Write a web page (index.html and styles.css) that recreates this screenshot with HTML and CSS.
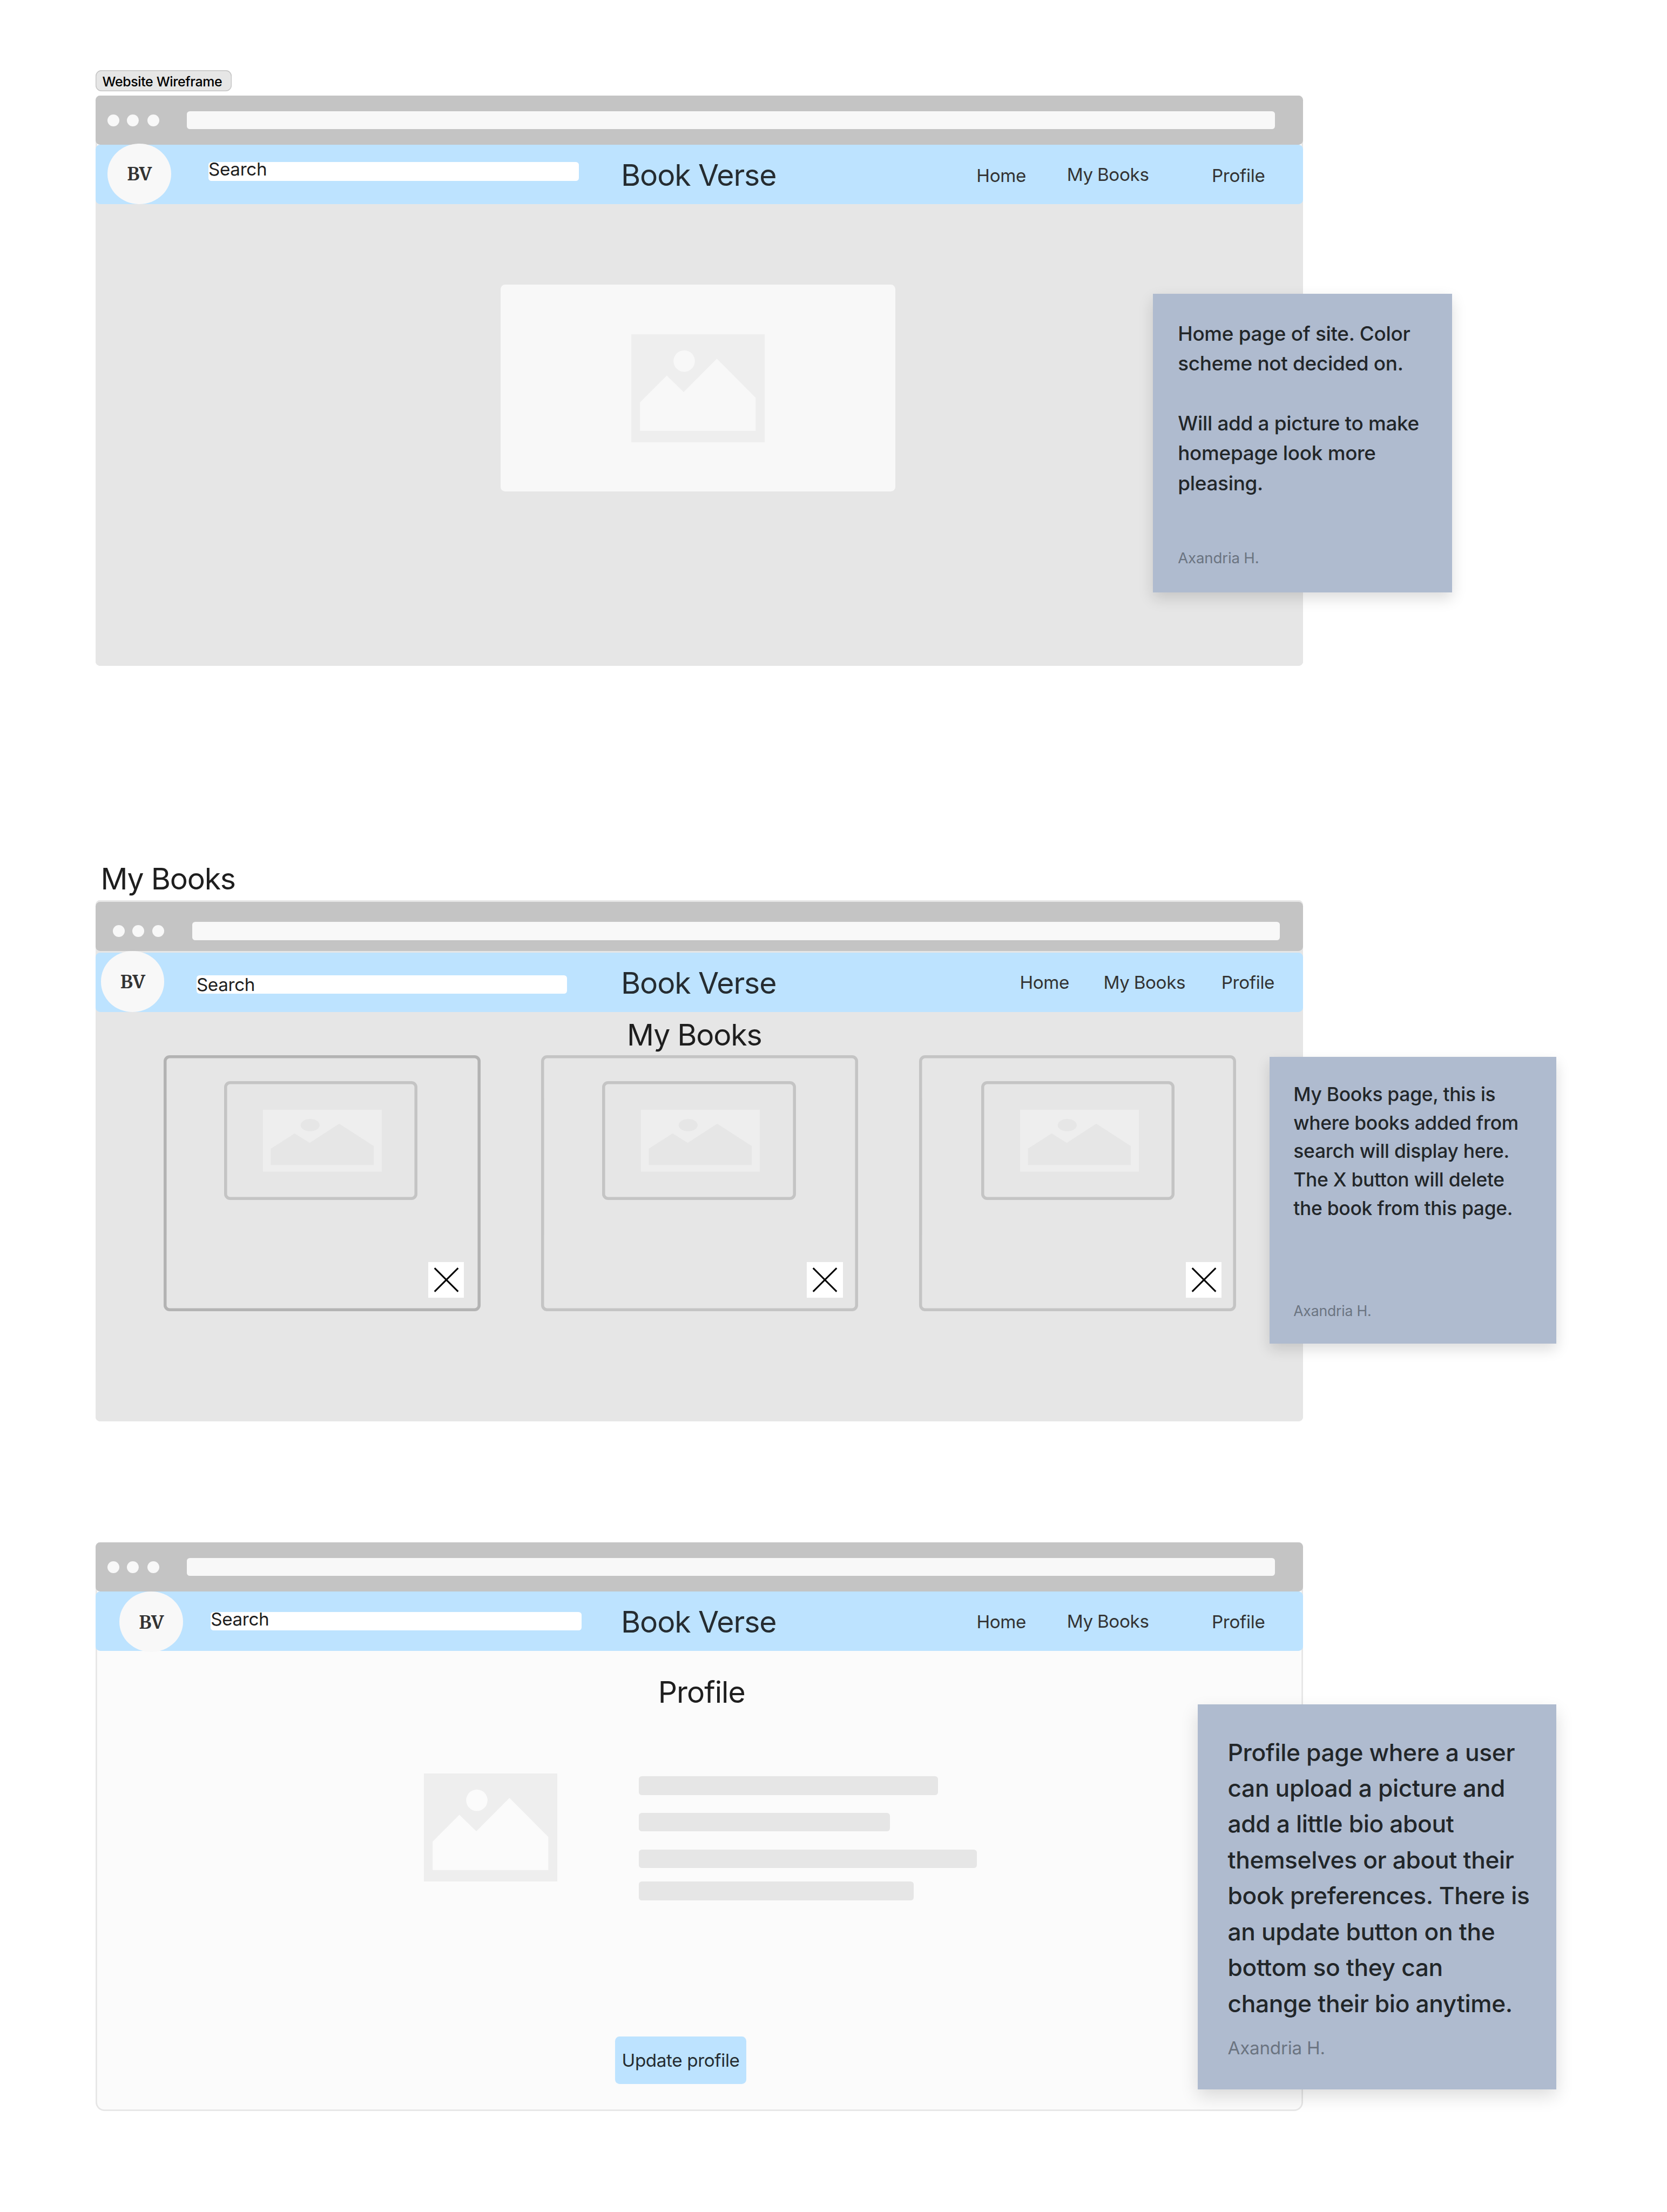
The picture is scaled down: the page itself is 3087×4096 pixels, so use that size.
FILE: index.html
```html
<!DOCTYPE html>
<html lang="en">
<head>
<meta charset="utf-8">
<title>Website Wireframe</title>
<link rel="stylesheet" href="styles.css">
</head>
<body>
<svg class="defs" aria-hidden="true">
  <symbol id="picture" viewBox="0 0 357 290" preserveAspectRatio="none">
    <path fill="#eee" fill-rule="evenodd" d="M0 0H357V290H0ZM23.5 182V258.3H333V169.7L229 65.3 140.3 154.7 95 110.5ZM170.3 71.7a28.6 28.6 0 1 0-57.2 0a28.6 28.6 0 1 0 57.2 0Z"/>
  </symbol>
  <symbol id="cross" viewBox="0 0 96 96">
    <path fill="none" stroke="#000" stroke-width="4.4" d="M17 16 80 79M80 16 17 79"/>
  </symbol>
</svg>

<main class="canvas">
  <section class="board board-home">
    <div class="tag">Website Wireframe</div>
    <div class="window">
      <div class="chrome">
        <i class="dot"></i><i class="dot"></i><i class="dot"></i>
        <div class="url"></div>
      </div>
      <nav class="nav">
        <div class="logo">BV</div>
        <div class="search">Search</div>
        <div class="brand">Book Verse</div>
        <a class="link">Home</a>
        <a class="link link-books">My Books</a>
        <a class="link">Profile</a>
      </nav>
      <div class="page">
        <div class="hero"><svg class="picture"><use href="#picture"/></svg></div>
      </div>
    </div>
    <aside class="note">
      <p class="note-text">Home page of site. Color<br>scheme not decided on.<br><br>Will add a picture to make<br>homepage look more<br>pleasing.</p>
      <p class="author">Axandria H.</p>
    </aside>
  </section>

  <section class="board board-books">
    <h2 class="board-title">My Books</h2>
    <div class="window">
      <div class="chrome">
        <i class="dot"></i><i class="dot"></i><i class="dot"></i>
        <div class="url"></div>
      </div>
      <nav class="nav">
        <div class="logo">BV</div>
        <div class="search">Search</div>
        <div class="brand">Book Verse</div>
        <a class="link">Home</a>
        <a class="link link-books">My Books</a>
        <a class="link">Profile</a>
      </nav>
      <div class="page">
        <h1 class="heading">My Books</h1>
        <div class="cards">
          <div class="card card-first">
            <div class="cover"><svg class="picture"><use href="#picture"/></svg></div>
            <div class="remove"><svg><use href="#cross"/></svg></div>
          </div>
          <div class="card card-second">
            <div class="cover"><svg class="picture"><use href="#picture"/></svg></div>
            <div class="remove"><svg><use href="#cross"/></svg></div>
          </div>
          <div class="card card-third">
            <div class="cover"><svg class="picture"><use href="#picture"/></svg></div>
            <div class="remove"><svg><use href="#cross"/></svg></div>
          </div>
        </div>
      </div>
    </div>
    <aside class="note">
      <p class="note-text">My Books page, this is<br>where books added from<br>search will display here.<br>The X button will delete<br>the book from this page.</p>
      <p class="author">Axandria H.</p>
    </aside>
  </section>

  <section class="board board-profile">
    <div class="window">
      <div class="chrome">
        <i class="dot"></i><i class="dot"></i><i class="dot"></i>
        <div class="url"></div>
      </div>
      <nav class="nav">
        <div class="logo">BV</div>
        <div class="search">Search</div>
        <div class="brand">Book Verse</div>
        <a class="link">Home</a>
        <a class="link link-books">My Books</a>
        <a class="link">Profile</a>
      </nav>
      <div class="page">
        <h1 class="heading">Profile</h1>
        <div class="bio">
          <svg class="picture"><use href="#picture"/></svg>
          <div class="lines">
            <div class="line line-1"></div>
            <div class="line line-2"></div>
            <div class="line line-3"></div>
            <div class="line line-4"></div>
          </div>
        </div>
        <div class="button">Update profile</div>
      </div>
    </div>
    <aside class="note">
      <p class="note-text">Profile page where a user<br>can upload a picture and<br>add a little bio about<br>themselves or about their<br>book preferences. There is<br>an update button on the<br>bottom so they can<br>change their bio anytime.</p>
      <p class="author">Axandria H.</p>
    </aside>
  </section>
</main>
</body>
</html>
```

FILE: styles.css
```css
/* 1rem = 100 design units */
html {
  font-size: 69.1875px;
}

* {
  box-sizing: border-box;
}

body {
  margin: 0;
  background: #fff;
  color: #1e1e1e;
  font-family: Inter, "Liberation Sans", sans-serif;
}

h1, h2, p {
  margin: 0;
  font-weight: 400;
}

svg {
  display: block;
}

.defs {
  position: absolute;
  width: 0;
  height: 0;
}

.canvas {
  height: 59.2rem;
  padding: 1.88rem 0 0 2.56rem;
  overflow: hidden;
}

.board {
  position: relative;
  width: 32.32rem;
}

.tag {
  width: 3.64rem;
  height: .56rem;
  margin-bottom: .12rem;
  padding: .07rem 0 0 .18rem;
  border-radius: .16rem;
  background: #e6e6e6;
  box-shadow: inset 0 0 0 .02rem #c4c4c4;
  color: #000;
  font-size: .36rem;
  font-weight: 500;
  line-height: .48rem;
  letter-spacing: -.014em;
  white-space: nowrap;
}

.board-title {
  margin: 0 0 .194rem .135rem;
  font-size: .8rem;
  font-weight: 430;
  line-height: .8rem;
  letter-spacing: -.022em;
}

/* Browser window */
.window {
  display: flex;
  flex-direction: column;
  border-radius: .12rem .12rem .24rem .24rem;
  background: #fbfbfb;
  box-shadow: inset 0 0 0 .04rem #e6e6e6;
}

.board-home .window {
  height: 15.26rem;
  border-radius: .12rem;
}

.board-books .window {
  height: 13.94rem;
  padding-top: .04rem;
  border-radius: .12rem;
  background: #e6e6e6;
}

.board-profile .window {
  height: 15.22rem;
}

.chrome {
  display: flex;
  flex: none;
  align-items: center;
  height: 1.32rem;
  padding-left: .32rem;
  border-radius: .12rem;
  background: #c4c4c4;
}

.board-books .chrome {
  margin-bottom: .04rem;
  padding: .24rem 0 0 .46rem;
}

.dot {
  width: .32rem;
  height: .32rem;
  margin-right: .2rem;
  border-radius: 50%;
  background: #f8f8f8;
}

.dot:nth-child(2) {
  margin-right: .22rem;
}

.dot:nth-child(3) {
  margin-right: .74rem;
}

.url {
  width: 29.12rem;
  height: .48rem;
  border-radius: .08rem;
  background: #f8f8f8;
}

/* Site navigation */
.nav {
  position: relative;
  z-index: 1;
  display: grid;
  flex: none;
  align-items: start;
  height: 1.58rem;
  border-radius: .12rem;
  background: #bde3ff;
  white-space: nowrap;
}

.board-home .nav {
  padding-left: .32rem;
  grid-template-columns: 2.7rem 11.042rem 9.516rem 2.42rem 3.876rem 1fr;
}

.board-books .nav {
  padding-left: .14rem;
  grid-template-columns: 2.56rem 11.362rem 10.673rem 2.241rem 3.154rem 1fr;
}

.board-profile .nav {
  padding-left: .64rem;
  grid-template-columns: 2.44rem 10.982rem 9.516rem 2.42rem 3.876rem 1fr;
}

.logo {
  width: 1.7rem;
  height: 1.62rem;
  margin-top: -.04rem;
  padding-top: .04rem;
  border-radius: 50%;
  background: #f8f8f8;
  color: #333;
  font: 700 .48rem/1.58rem Merriweather, "Noto Serif", "Liberation Serif", serif;
  text-align: center;
}

.board-profile .logo {
  margin-top: 0;
}

.search {
  width: 9.92rem;
  height: .5rem;
  margin-top: .46rem;
  border-radius: .08rem;
  background: #fff;
  font-size: .48rem;
  line-height: .39rem;
  letter-spacing: -.01em;
}

.board-books .search {
  margin-top: .6rem;
  line-height: .51rem;
}

.board-profile .search {
  margin-top: .54rem;
}

.brand {
  margin-top: .406rem;
  color: #252c31;
  font-size: .8rem;
  font-weight: 430;
  line-height: .8rem;
  letter-spacing: -.02em;
}

.link {
  margin-top: .58rem;
  color: #333;
  font-size: .48rem;
  line-height: .48rem;
  letter-spacing: -.01em;
  word-spacing: -.03em;
}

.link-books {
  margin-top: .565rem;
}

.board-books .link {
  margin-top: .563rem;
}

.page {
  flex: 1;
}

/* Home */
.board-home .page {
  margin-top: -.2rem;
  padding: 2.36rem 0 0 10.84rem;
  border-radius: 0 0 .12rem .12rem;
  background: #e6e6e6;
}

.hero {
  display: flex;
  align-items: center;
  justify-content: center;
  width: 10.56rem;
  height: 5.54rem;
  border-radius: .12rem;
  background: #f8f8f8;
}

.picture {
  width: 3.57rem;
  height: 2.9rem;
}

/* My Books */
.board-books {
  margin-top: 5.286rem;
}

.heading {
  margin: .212rem 0 0 14.222rem;
  font-size: .8rem;
  font-weight: 430;
  line-height: .8rem;
  letter-spacing: -.022em;
}

.cards {
  display: flex;
  margin: .148rem 0 0 1.82rem;
}

/* Outlines are inset shadows so their width is not snapped to whole pixels */
.card {
  display: flex;
  flex-direction: column;
  justify-content: space-between;
  width: 8.48rem;
  height: 6.86rem;
  padding: .7rem 0 .36rem;
  border-radius: .16rem;
  box-shadow: inset 0 0 0 .08rem #c4c4c4;
}

.card-first {
  margin-right: 1.62rem;
  padding-left: 1.62rem;
  box-shadow: inset 0 0 0 .08rem #b3b3b3;
}

.card-second {
  margin-right: 1.64rem;
  padding-left: 1.64rem;
}

.card-third {
  padding-left: 1.66rem;
}

.cover {
  width: 5.18rem;
  height: 3.18rem;
  padding: .76rem 0 0 1.04rem;
  border-radius: .16rem;
  box-shadow: inset 0 0 0 .08rem #c4c4c4;
}

.cover .picture {
  width: 3.18rem;
  height: 1.66rem;
}

.remove {
  width: .96rem;
  height: .96rem;
  margin-left: 5.48rem;
  background: #fff;
}

.card-first .remove {
  margin-left: 5.46rem;
}

.remove svg {
  width: .96rem;
  height: .96rem;
}

/* Profile */
.board-profile {
  margin-top: 3.24rem;
}

.board-profile .heading {
  margin: .696rem 0 0 15.055rem;
  letter-spacing: -.018em;
}

.bio {
  display: flex;
  gap: 2.19rem;
  margin: 1.784rem 0 0 8.78rem;
}

.lines {
  padding-top: .08rem;
}

.line {
  height: .5rem;
  margin-bottom: .48rem;
  border-radius: .08rem;
  background: #e6e6e6;
}

.line-1 {
  width: 8rem;
}

.line-2 {
  width: 6.72rem;
}

.line-3 {
  width: 9.04rem;
  margin-bottom: .36rem;
}

.line-4 {
  width: 7.36rem;
  margin-bottom: 0;
}

.button {
  width: 3.52rem;
  height: 1.28rem;
  margin: 3.64rem 0 0 13.9rem;
  border-radius: .12rem;
  background: #bde3ff;
  color: #252c31;
  font-size: .48rem;
  line-height: 1.28rem;
  letter-spacing: -.011em;
  text-align: center;
  white-space: nowrap;
}

/* Sticky notes lie over the windows */
.note {
  position: absolute;
  z-index: 2;
  display: flex;
  flex-direction: column;
  justify-content: space-between;
  padding: 1.25em 0 1.15em 1.25em;
  background: #afbbcf;
  box-shadow: 0 .3em .7em rgba(0, 0, 0, .14);
  color: #222629;
  line-height: 1.5;
  letter-spacing: -.008em;
  white-space: nowrap;
}

.note-text {
  font-weight: 450;
}

.board-home .note {
  top: 5.98rem;
  left: 28.3rem;
  width: 8rem;
  height: 8rem;
  font-size: .5333rem;
}

.board-books .note {
  top: 5.174rem;
  left: 31.42rem;
  width: 7.68rem;
  height: 7.68rem;
  font-size: .512rem;
  line-height: 1.49;
}

.board-profile .note {
  top: 4.34rem;
  left: 29.5rem;
  width: 9.6rem;
  height: 10.3rem;
  font-size: .64rem;
}

.author {
  color: #6b7481;
  font-size: .75em;
  font-weight: 400;
  letter-spacing: -.007em;
}
```
